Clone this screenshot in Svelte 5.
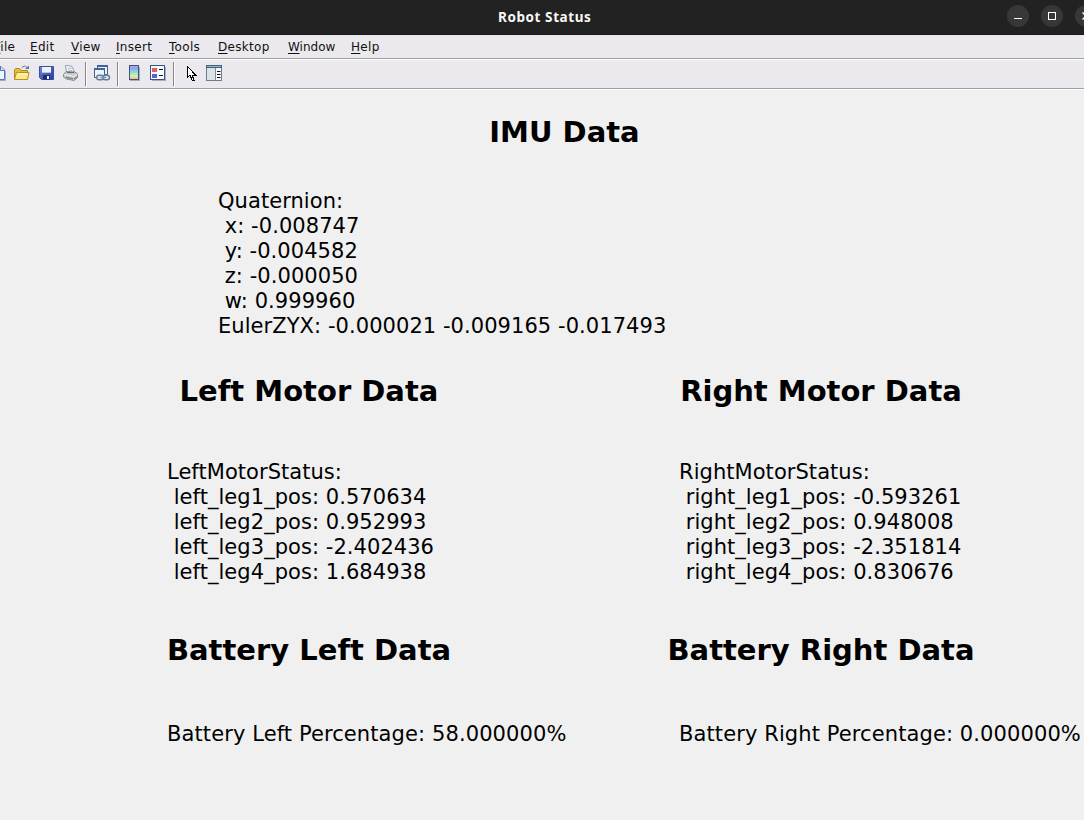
<script>
  const menus = ['File', 'Edit', 'View', 'Insert', 'Tools', 'Desktop', 'Window', 'Help'];

  const imu = [
    'Quaternion:',
    ' x: -0.008747',
    ' y: -0.004582',
    ' z: -0.000050',
    ' w: 0.999960',
    'EulerZYX: -0.000021 -0.009165 -0.017493'
  ].join('\n');

  const motors = [
    {
      title: 'Left Motor Data',
      text: [
        'LeftMotorStatus:',
        ' left_leg1_pos: 0.570634',
        ' left_leg2_pos: 0.952993',
        ' left_leg3_pos: -2.402436',
        ' left_leg4_pos: 1.684938'
      ].join('\n')
    },
    {
      title: 'Right Motor Data',
      text: [
        'RightMotorStatus:',
        ' right_leg1_pos: -0.593261',
        ' right_leg2_pos: 0.948008',
        ' right_leg3_pos: -2.351814',
        ' right_leg4_pos: 0.830676'
      ].join('\n')
    }
  ];

  const batteries = [
    { title: 'Battery Left Data', text: 'Battery Left Percentage: 58.000000%' },
    { title: 'Battery Right Data', text: 'Battery Right Percentage: 0.000000%' }
  ];
</script>

<div class="window">
  <header class="titlebar">
    <span class="title">Robot Status</span>
    <div class="controls">
      <span class="ctl"><svg width="22" height="22"><path d="M7 13.5h8" stroke="#fff" fill="none" /></svg></span>
      <span class="ctl"><svg width="22" height="22"><rect x="7.5" y="7.5" width="7" height="7" stroke="#fff" fill="none" /></svg></span>
      <span class="ctl"><svg width="22" height="22"><path d="M7.5 7.5l7 7M14.5 7.5l-7 7" stroke="#fff" stroke-width="1.3" fill="none" /></svg></span>
    </div>
  </header>

  <nav class="menubar">
    {#each menus as m}
      <span class="menu"><u>{m[0]}</u>{m.slice(1)}</span>
    {/each}
  </nav>

  <div class="toolbar">
    <svg class="new" width="18" height="18" viewBox="0 0 18 18">
      <path d="M2.500 2.500h8.500l3.500 3.500v9.500h-12z" fill="#eef6ff" stroke="#4f78b0" />
      <path d="M10.500 2.500v4h4" fill="#cfe2f6" stroke="#4f78b0" />
      <path d="M15.500 7v9.500h-9" fill="none" stroke="#98aeca" />
    </svg>
    <svg class="open" width="18" height="18" viewBox="0 0 18 18">
      <path d="M1.500 15V5.500l1-1h4l1.500 2h6.500V15z" fill="#e9bb3c" stroke="#b58b22" />
      <path d="M1.500 15.500l2-7h12.500l-1.500 7z" fill="#fbe98c" stroke="#b9912b" />
      <path d="M4.500 10h10" stroke="#fff8c4" />
      <path d="M8.500 4q3-3.500 5.500-.5" fill="none" stroke="#62768e" />
      <path d="M12 5h4V1.500z" fill="#62768e" />
    </svg>
    <svg class="save" width="18" height="18" viewBox="0 0 18 18">
      <defs><linearGradient id="disk" x1="0" y1="0" x2="1" y2="1"><stop offset="0" stop-color="#7386dc" /><stop offset="1" stop-color="#2637a0" /></linearGradient></defs>
      <path d="M1.500 2.500h14v13h-12l-2-2z" fill="url(#disk)" stroke="#3c4da6" />
      <path d="M4 3h9v6H4z" fill="#eef2fc" />
      <path d="M4 8h9v1H4z" fill="#b4c2e9" />
      <path d="M5 11h7v4.500H5z" fill="#202d69" />
      <path d="M9 12h2v3H9z" fill="#f4f6ff" />
    </svg>
    <svg class="print" width="18" height="18" viewBox="0 0 18 18">
      <path d="M4.500 8.500l-1-7 6 .5 3 6z" fill="#fafcff" stroke="#8e9caf" />
      <path d="M5.500 4l4 .5M6 6l4 .5" stroke="#a9bbcf" />
      <path d="M1.500 10.500L4 7.500l8.500.5 3 1.500v4l-3.500 3-7.500-1.500-3-2z" fill="#c9c9c9" stroke="#8b8b8b" />
      <path d="M2 10.500l9.500 2 4-2.500" fill="none" stroke="#f5f5f5" />
      <path d="M4 12.500l7 1.500v1.500l-7-1.500z" fill="#858585" />
      <path d="M12 15l3-2" stroke="#707070" />
      <path d="M5 8.500h7" stroke="#606c78" />
    </svg>
    <i class="sep s1"></i>
    <svg class="link" width="18" height="18" viewBox="0 0 18 18">
      <path d="M4.500 1.500h10v9h-10z" fill="#e9f2fa" stroke="#3f608f" />
      <path d="M4 1h11v2H4z" fill="#3f6598" />
      <path d="M1.500 4.500h10v9h-10z" fill="#edf5fc" stroke="#3f608f" />
      <path d="M1 4h11v2H1z" fill="#3f6598" />
      <rect x="3.700" y="11.200" width="7" height="4.500" rx="2.200" fill="#d7e2ec" stroke="#687e96" stroke-width="1.400" />
      <rect x="10" y="11.200" width="6.500" height="4.500" rx="2.200" fill="#d7e2ec" stroke="#687e96" stroke-width="1.400" />
      <path d="M7.500 13.500h5.500" stroke="#8296ac" stroke-width="1.500" />
    </svg>
    <i class="sep s2"></i>
    <svg class="cbar" width="18" height="18" viewBox="0 0 18 18">
      <defs><linearGradient id="cmap" x1="0" y1="0" x2="0" y2="1"><stop offset="0" stop-color="#c59ae0" /><stop offset=".2" stop-color="#8fa4e8" /><stop offset=".5" stop-color="#8be0e3" /><stop offset=".75" stop-color="#e7ee9b" /><stop offset="1" stop-color="#f0b48c" /></linearGradient></defs>
      <path d="M5 3h10v14H5z" fill="#a5afc2" />
      <rect x="4.500" y="1.500" width="9" height="14" fill="url(#cmap)" stroke="#3a5482" />
    </svg>
    <svg class="legend" width="18" height="18" viewBox="0 0 18 18">
      <path d="M3 3h14v14H3z" fill="#a5afc2" />
      <rect x="1.500" y="1.500" width="14" height="14" fill="#f8faff" stroke="#3a5482" />
      <path d="M3 4h5v4H3z" fill="#d9605c" />
      <path d="M3 10h5v4H3z" fill="#605fd0" />
      <path d="M10 5.500h4M10 11.500h4" stroke="#111" />
    </svg>
    <i class="sep s3"></i>
    <svg class="arrow" width="18" height="18" viewBox="0 0 18 18">
      <path d="M4.500 2.500v11l2.500-2.500 2 5h2l-2-5h3.500z" fill="#fff" stroke="#000" shape-rendering="crispEdges" />
    </svg>
    <svg class="props" width="18" height="18" viewBox="0 0 18 18">
      <rect x="1.500" y="1.500" width="15" height="15" fill="#f6f8f8" stroke="#6b7c8b" />
      <path d="M1 1h16v3H1z" fill="#40617f" />
      <path d="M2 2.500h14" stroke="#91b6d2" />
      <path d="M2 4h8v12H2z" fill="#dde2e4" />
      <path d="M10.500 4v12" stroke="#7e8d98" />
      <path d="M12 7.500h3.500M12 10.500h3.500M12 13.500h3.500" stroke="#111" />
    </svg>
  </div>

  <main>
    <section class="imu">
      <h2>IMU Data</h2>
      <pre>{imu}</pre>
    </section>
    <div class="pair motors">
      {#each motors as p}
        <section><h2>{p.title}</h2><pre>{p.text}</pre></section>
      {/each}
    </div>
    <div class="pair batteries">
      {#each batteries as p}
        <section><h2>{p.title}</h2><pre>{p.text}</pre></section>
      {/each}
    </div>
  </main>
</div>

<style>
  :global(body) { background: #f0f0f0; overflow: hidden; }
  .window {
    width: 1084px; height: 820px; overflow: hidden;
    display: flex; flex-direction: column;
    background: #f0f0f0; color: #000;
    font-family: "DejaVu Sans", sans-serif;
  }
  .titlebar {
    flex: none; height: 35px; box-sizing: border-box;
    background: #222; border-bottom: 1px solid #1a161a;
    display: flex; align-items: center;
  }
  .title {
    flex: none; margin-left: 498px; width: 120px; white-space: nowrap;
    color: #f7f7f7; font: bold 13.500px/34px "Noto Sans", sans-serif;
    letter-spacing: .58px;
  }
  .controls { flex: none; display: flex; gap: 12px; margin-left: 389px; padding-bottom: 2px; }
  .ctl { flex: none; width: 22px; height: 22px; border-radius: 50%; background: #373737; }
  .ctl svg { display: block; }
  .menubar {
    flex: none; height: 25px; box-sizing: border-box;
    background: #ebe9ed; border-bottom: 1px solid #fff; box-shadow: inset 0 -1px #a09fa2;
    display: grid; grid-template-columns: 35px 41px 45px 53px 49px 70px 63px 60px;
    padding-top: 1px;
    font-size: 12px; line-height: 23px; letter-spacing: .3px; color: #111;
  }
  .menu { white-space: nowrap; }
  .menu:first-child { margin-left: -6px; }
  .menu:nth-child(n + 2) { margin-left: -5px; }
  .menu:nth-child(7) { letter-spacing: 0; }
  .menu u { text-underline-offset: 2px; text-decoration-thickness: 1px; }
  .toolbar {
    flex: none; height: 30px; box-sizing: border-box;
    background: #ebe9ed; border-bottom: 1px solid #fff; box-shadow: inset 0 -1px #a09fa2;
    display: flex; align-items: flex-start; padding-top: 4px;
  }
  .toolbar svg { flex: none; width: 18px; height: 18px; }
  .new { margin-left: -10px; }
  .open { margin-left: 5px; }
  .save { margin-left: 7px; }
  .print { margin-left: 6px; }
  .link { margin-left: 6px; }
  .cbar { margin-left: 6px; }
  .legend { margin-left: 6px; }
  .arrow { margin-left: 8px; }
  .props { margin-left: 4px; }
  .sep { flex: none; width: 1px; height: 24px; margin-top: -2px; background: #858488; border-right: 1px solid #fff; }
  .s1 { margin-left: 5px; }
  .s2 { margin-left: 6px; }
  .s3 { margin-left: 6px; }
  main { padding-left: 53px; width: 1031px; }
  h2 { margin: 0; font-size: 29px; line-height: 34px; font-weight: bold; text-align: center; white-space: nowrap; }
  pre { margin: 0; font: 21px/25px "DejaVu Sans", sans-serif; white-space: pre; }
  .imu { width: 1023px; height: 259px; padding-top: 25px; box-sizing: border-box; }
  .imu pre { margin: 40px 0 0 165px; letter-spacing: .06px; }
  .pair { display: grid; grid-template-columns: 512px 512px; padding-top: 25px; height: 234px; }
  .motors pre { margin: 52px 0 0 114px; letter-spacing: .05px; }
  .batteries pre { margin: 55px 0 0 114px; letter-spacing: .1px; }
</style>
